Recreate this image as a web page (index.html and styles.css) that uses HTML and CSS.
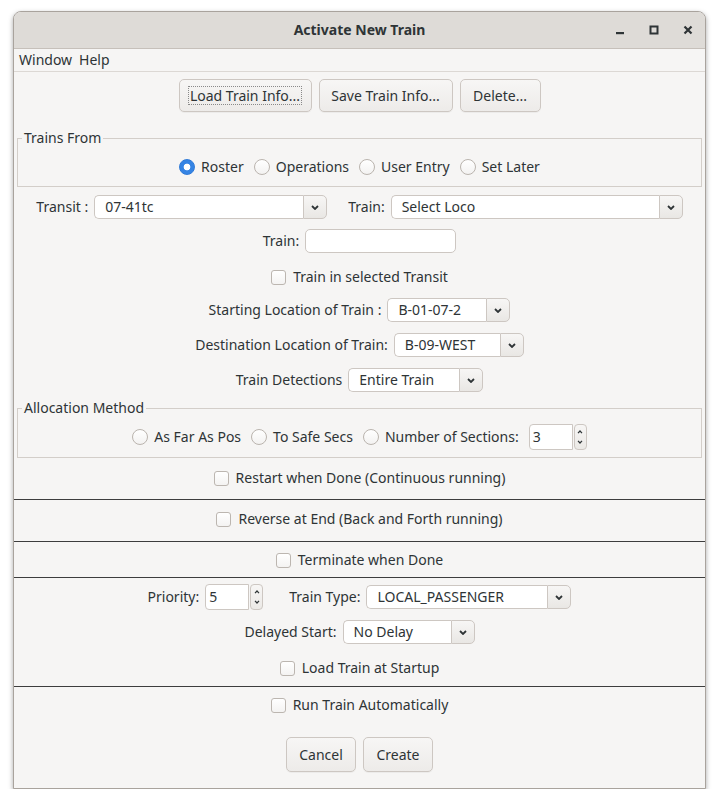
FILE: index.html
```html
<!DOCTYPE html>
<html>
<head>
<meta charset="utf-8">
<title>Activate New Train</title>
<link rel="stylesheet" href="styles.css">
</head>
<body>
<div class="window">
  <div class="titlebar">
    <div></div>
    <div class="title">Activate New Train</div>
    <div class="controls">
      <span class="ctl"><svg width="10" height="10" viewBox="0 0 10 10"><rect x="1" y="7" width="8" height="2.2" fill="#2e3436"/></svg></span>
      <span class="ctl"><svg width="10" height="10" viewBox="0 0 10 10"><rect x="1.5" y="1.5" width="7" height="7" fill="none" stroke="#2e3436" stroke-width="2"/></svg></span>
      <span class="ctl"><svg width="10" height="10" viewBox="0 0 10 10"><path d="M1.5 1.5 L8.5 8.5 M8.5 1.5 L1.5 8.5" stroke="#2e3436" stroke-width="2.2"/></svg></span>
    </div>
  </div>
  <div class="menubar"><span class="menu">Window</span><span class="menu">Help</span></div>
  <div class="content">
    <div class="row topbtns">
      <button class="btn w133"><span class="focus">Load Train Info...</span></button>
      <button class="btn w134">Save Train Info...</button>
      <button class="btn w81">Delete...</button>
    </div>

    <fieldset class="group g1">
      <legend>Trains From</legend>
      <div class="row radios h39">
        <span class="radio on"></span><span class="rtext">Roster</span>
        <span class="radio"></span><span class="rtext">Operations</span>
        <span class="radio"></span><span class="rtext">User Entry</span>
        <span class="radio"></span><span class="rtext">Set Later</span>
      </div>
    </fieldset>

    <div class="row r-transit">
      <span class="lbl">Transit :</span>
      <div class="combo"><span class="field fw209">07-41tc</span><span class="arrow"><svg width="8" height="5" viewBox="0 0 8 5"><polyline points="1,1 4,4 7,1" fill="none" stroke="#2e3436" stroke-width="1.8"/></svg></span></div>
      <span class="lbl lgap">Train:</span>
      <div class="combo"><span class="field fw268">Select Loco</span><span class="arrow"><svg width="8" height="5" viewBox="0 0 8 5"><polyline points="1,1 4,4 7,1" fill="none" stroke="#2e3436" stroke-width="1.8"/></svg></span></div>
    </div>

    <div class="row r-train">
      <span class="lbl">Train:</span>
      <span class="entry fw151"></span>
    </div>

    <div class="row r-check1">
      <span class="check"></span><span class="ctext">Train in selected Transit</span>
    </div>

    <div class="row r-start">
      <span class="lbl">Starting Location of Train :</span>
      <div class="combo"><span class="field fw99">B-01-07-2</span><span class="arrow"><svg width="8" height="5" viewBox="0 0 8 5"><polyline points="1,1 4,4 7,1" fill="none" stroke="#2e3436" stroke-width="1.8"/></svg></span></div>
    </div>

    <div class="row r-dest">
      <span class="lbl">Destination Location of Train:</span>
      <div class="combo"><span class="field fw106">B-09-WEST</span><span class="arrow"><svg width="8" height="5" viewBox="0 0 8 5"><polyline points="1,1 4,4 7,1" fill="none" stroke="#2e3436" stroke-width="1.8"/></svg></span></div>
    </div>

    <div class="row r-detect">
      <span class="lbl">Train Detections</span>
      <div class="combo"><span class="field fw111">Entire Train</span><span class="arrow"><svg width="8" height="5" viewBox="0 0 8 5"><polyline points="1,1 4,4 7,1" fill="none" stroke="#2e3436" stroke-width="1.8"/></svg></span></div>
    </div>

    <fieldset class="group g2">
      <legend>Allocation Method</legend>
      <div class="row radios h40">
        <span class="radio"></span><span class="rtext">As Far As Pos</span>
        <span class="radio"></span><span class="rtext">To Safe Secs</span>
        <span class="radio"></span><span class="rtext">Number of Sections:</span>
        <div class="spinner"><span class="sfield fw44">3</span><span class="sarrows"><svg width="6" height="4" viewBox="0 0 6 4"><polyline points="1,3.2 3,1 5,3.2" fill="none" stroke="#2e3436" stroke-width="1.2"/></svg><svg width="6" height="4" viewBox="0 0 6 4"><polyline points="1,0.8 3,3 5,0.8" fill="none" stroke="#2e3436" stroke-width="1.2"/></svg></span></div>
      </div>
    </fieldset>

    <div class="row r-restart">
      <span class="check"></span><span class="ctext">Restart when Done (Continuous running)</span>
    </div>
    <div class="sep s1"></div>
    <div class="row r-reverse">
      <span class="check"></span><span class="ctext">Reverse at End (Back and Forth running)</span>
    </div>
    <div class="sep s2"></div>
    <div class="row r-term">
      <span class="check"></span><span class="ctext">Terminate when Done</span>
    </div>
    <div class="sep s3"></div>

    <div class="row r-prio">
      <span class="lbl">Priority:</span>
      <div class="spinner"><span class="sfield fw44">5</span><span class="sarrows"><svg width="6" height="4" viewBox="0 0 6 4"><polyline points="1,3.2 3,1 5,3.2" fill="none" stroke="#2e3436" stroke-width="1.2"/></svg><svg width="6" height="4" viewBox="0 0 6 4"><polyline points="1,0.8 3,3 5,0.8" fill="none" stroke="#2e3436" stroke-width="1.2"/></svg></span></div>
      <span class="lbl lgap2">Train Type:</span>
      <div class="combo"><span class="field fw181">LOCAL_PASSENGER</span><span class="arrow"><svg width="8" height="5" viewBox="0 0 8 5"><polyline points="1,1 4,4 7,1" fill="none" stroke="#2e3436" stroke-width="1.8"/></svg></span></div>
    </div>

    <div class="row r-delay">
      <span class="lbl">Delayed Start:</span>
      <div class="combo"><span class="field fw108">No Delay</span><span class="arrow"><svg width="8" height="5" viewBox="0 0 8 5"><polyline points="1,1 4,4 7,1" fill="none" stroke="#2e3436" stroke-width="1.8"/></svg></span></div>
    </div>

    <div class="row r-load">
      <span class="check"></span><span class="ctext">Load Train at Startup</span>
    </div>
    <div class="sep s4"></div>
    <div class="row r-run">
      <span class="check"></span><span class="ctext">Run Train Automatically</span>
    </div>

    <div class="row bottombtns">
      <button class="btn w70">Cancel</button>
      <button class="btn w70">Create</button>
    </div>
  </div>
</div>
</body>
</html>
```

FILE: styles.css
```css
* { box-sizing: border-box; }
html, body { margin: 0; padding: 0; background: #ffffff; }
body {
  font-family: "Noto Sans", "DejaVu Sans", sans-serif;
  font-size: 14px;
  color: #2e3436;
  line-height: 18px;
}

.window {
  margin: 11px 0 0 13px;
  width: 693px;
  height: 778px;
  border: 1px solid #a9a39d;
  border-radius: 8px 8px 0 0;
  background: #f6f5f4;
  box-shadow: 0 2px 5px rgba(0, 0, 0, 0.35);
  overflow: hidden;
  display: flex;
  flex-direction: column;
}

.titlebar {
  height: 37px;
  flex: none;
  background: #dedbd7;
  border-bottom: 1px solid #c6c0ba;
  display: grid;
  grid-template-columns: 1fr auto 1fr;
  align-items: center;
}
.title { font-weight: bold; font-size: 14px; }
.controls {
  display: flex;
  justify-content: flex-end;
  gap: 10px;
  padding-right: 5px;
}
.ctl {
  width: 24px;
  height: 24px;
  display: flex;
  align-items: center;
  justify-content: center;
}

.menubar {
  height: 23px;
  flex: none;
  border-bottom: 1px solid #dcd8d4;
  display: flex;
  align-items: center;
  padding-left: 5px;
  gap: 7px;
}

.content {
  flex: 1;
  display: flex;
  flex-direction: column;
}

.row {
  display: flex;
  align-items: center;
  justify-content: center;
  height: 24px;
  flex: none;
}

/* buttons */
.btn {
  font-family: inherit;
  font-size: 14px;
  color: #2e3436;
  height: 33px;
  border: 1px solid #cdc7c2;
  border-radius: 5px;
  background: linear-gradient(#f7f6f5, #edebe9);
  box-shadow: 0 1px 0 rgba(0,0,0,0.04);
  padding: 0;
  display: flex;
  align-items: center;
  justify-content: center;
}
.w133 { width: 133px; }
.w134 { width: 134px; }
.w81 { width: 81px; }
.w70 { width: 70px; height: 35px; }
.focus {
  border: 1px dotted #8a8a8a;
  padding: 0 1px;
  line-height: 17px;
}
.topbtns { margin-top: 7px; height: 33px; gap: 7px; }
.bottombtns { margin-top: 20px; height: 35px; gap: 7px; }

/* groups */
.group {
  margin: 0 3px;
  padding: 0;
  border: 1px solid #d3cec9;
  border-radius: 0;
  min-width: 0;
}
.group legend {
  margin-left: 4px;
  padding: 0 2px;
  line-height: 18px;
  height: 18px;
}
.g1 { margin-top: 17px; }
.g2 { margin-top: 7px; }
.h39 { height: 39px; }
.h40 { height: 40px; }

/* radios */
.radio {
  width: 16px;
  height: 16px;
  border-radius: 50%;
  border: 1px solid #bab4ae;
  background: linear-gradient(#ffffff, #f3f2f1);
  flex: none;
  margin-right: 6px;
}
.radio.on {
  border-color: #2f7ad8;
  background: radial-gradient(circle, #ffffff 0 3px, #3584e4 3.7px);
}
.rtext { margin-right: 10px; }
.rtext:last-child { margin-right: 0; }

/* checkboxes */
.check {
  width: 15px;
  height: 15px;
  border: 1px solid #bcb6b0;
  border-radius: 3px;
  background: linear-gradient(#ffffff, #f4f3f2);
  margin-right: 7px;
  flex: none;
}

/* labels and combos */
.lbl { margin-right: 6px; white-space: nowrap; }
.lgap { margin-left: 21px; }
.lgap2 { margin-left: 26px; }

.combo { display: flex; height: 24px; }
.field {
  height: 24px;
  background: #ffffff;
  border: 1px solid #cdc7c2;
  border-right: none;
  border-radius: 5px 0 0 5px;
  padding-left: 10px;
  line-height: 22px;
  white-space: nowrap;
}
.arrow {
  width: 24px;
  height: 24px;
  border: 1px solid #cdc7c2;
  border-radius: 0 5px 5px 0;
  background: linear-gradient(#f7f6f5, #e9e7e4);
  display: flex;
  align-items: center;
  justify-content: center;
}
.entry {
  height: 24px;
  background: #ffffff;
  border: 1px solid #cdc7c2;
  border-radius: 5px;
}
.fw209 { width: 209px; }
.fw268 { width: 268px; }
.fw151 { width: 151px; }
.fw99 { width: 99px; }
.fw106 { width: 106px; }
.fw111 { width: 111px; }
.fw181 { width: 181px; }
.fw108 { width: 108px; }
.fw44 { width: 44px; }

/* spinners */
.spinner { display: flex; height: 26px; gap: 1px; }
.sfield {
  height: 26px;
  background: #ffffff;
  border: 1px solid #cdc7c2;
  border-radius: 4px 0 0 4px;
  padding-left: 3px;
  line-height: 24px;
}
.sarrows {
  width: 13px;
  height: 26px;
  border: 1px solid #cdc7c2;
  border-radius: 4px;
  background: linear-gradient(#f7f6f5, #ebe9e6);
  display: flex;
  flex-direction: column;
  align-items: center;
  justify-content: space-between;
  padding: 5px 0 5px;
}

/* rows vertical rhythm */
.r-transit { margin-top: 8px; }
.r-train { margin-top: 10px; }
.r-check1 { margin-top: 12px; }
.r-start { margin-top: 9px; }
.r-dest { margin-top: 11px; }
.r-detect { margin-top: 11px; }
.r-restart { margin-top: 8px; }
.r-reverse { margin-top: 7px; }
.r-term { margin-top: 6px; }
.r-prio { margin-top: 6px; height: 26px; }
.r-delay { margin-top: 10px; }
.r-load { margin-top: 12px; }
.r-run { margin-top: 6px; }

.sep { height: 1px; background: #3d3d3d; flex: none; }
.s1 { margin-top: 9px; }
.s2 { margin-top: 10px; }
.s3 { margin-top: 5px; }
.s4 { margin-top: 6px; }
```
